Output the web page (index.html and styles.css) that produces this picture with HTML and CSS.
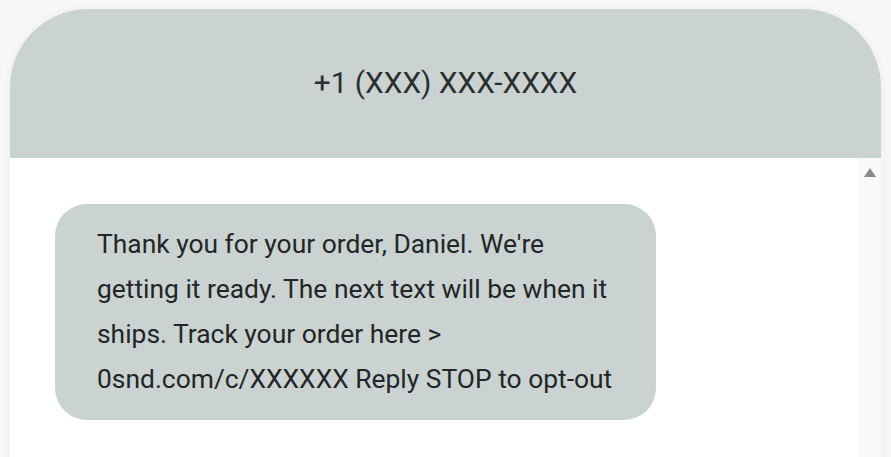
FILE: index.html
```html
<!DOCTYPE html>
<html>
<head>
<meta charset="utf-8">
<link rel="stylesheet" href="styles.css">
</head>
<body>
<div class="phone">
  <header class="phone-header">
    <div class="number">+1 (XXX) XXX-XXXX</div>
  </header>
  <div class="phone-body">
    <div class="messages">
      <div class="bubble">
        <span class="line">Thank you for your order, Daniel. We're</span>
        <span class="line">getting it ready. The next text will be when it</span>
        <span class="line">ships. Track your order here &gt;</span>
        <span class="line">0snd.com/c/XXXXXX Reply STOP to opt-out</span>
      </div>
    </div>
    <div class="scrollbar">
      <div class="arrow-up"></div>
    </div>
  </div>
</div>
</body>
</html>
```

FILE: styles.css
```css
html, body {
  margin: 0;
  padding: 0;
  height: 100%;
  overflow: hidden;
}
body {
  background: #f7f7f7;
  font-family: Roboto, "Liberation Sans", sans-serif;
  padding: 9px 10px 0 10px;
  box-sizing: border-box;
}
.phone {
  width: 871px;
  height: 640px;
  background: #ffffff;
  border-radius: 78px 78px 0 0;
  box-shadow: 0 0 10px rgba(0, 0, 0, 0.05);
  display: flex;
  flex-direction: column;
  overflow: hidden;
}
.phone-header {
  height: 149px;
  flex: none;
  background: #cad3d2;
  display: flex;
  align-items: center;
  justify-content: center;
}
.number {
  font-size: 29.8px;
  color: #2a2e2e;
  margin-top: -2px;
}
.phone-body {
  flex: 1;
  display: flex;
}
.messages {
  flex: 1;
  padding: 46px 0 0 45px;
}
.bubble {
  width: 517px;
  padding: 18px 42px;
  background: #cad3d2;
  border-radius: 32px;
  font-size: 26.4px;
  line-height: 45px;
  color: #222626;
}
.line {
  display: block;
  white-space: nowrap;
}
.scrollbar {
  width: 23px;
  flex: none;
  background: #f9f9f9;
  display: flex;
  justify-content: center;
  padding-top: 10px;
}
.arrow-up {
  width: 0;
  height: 0;
  border-left: 6px solid transparent;
  border-right: 6px solid transparent;
  border-bottom: 9px solid #8a8a8a;
}
```
